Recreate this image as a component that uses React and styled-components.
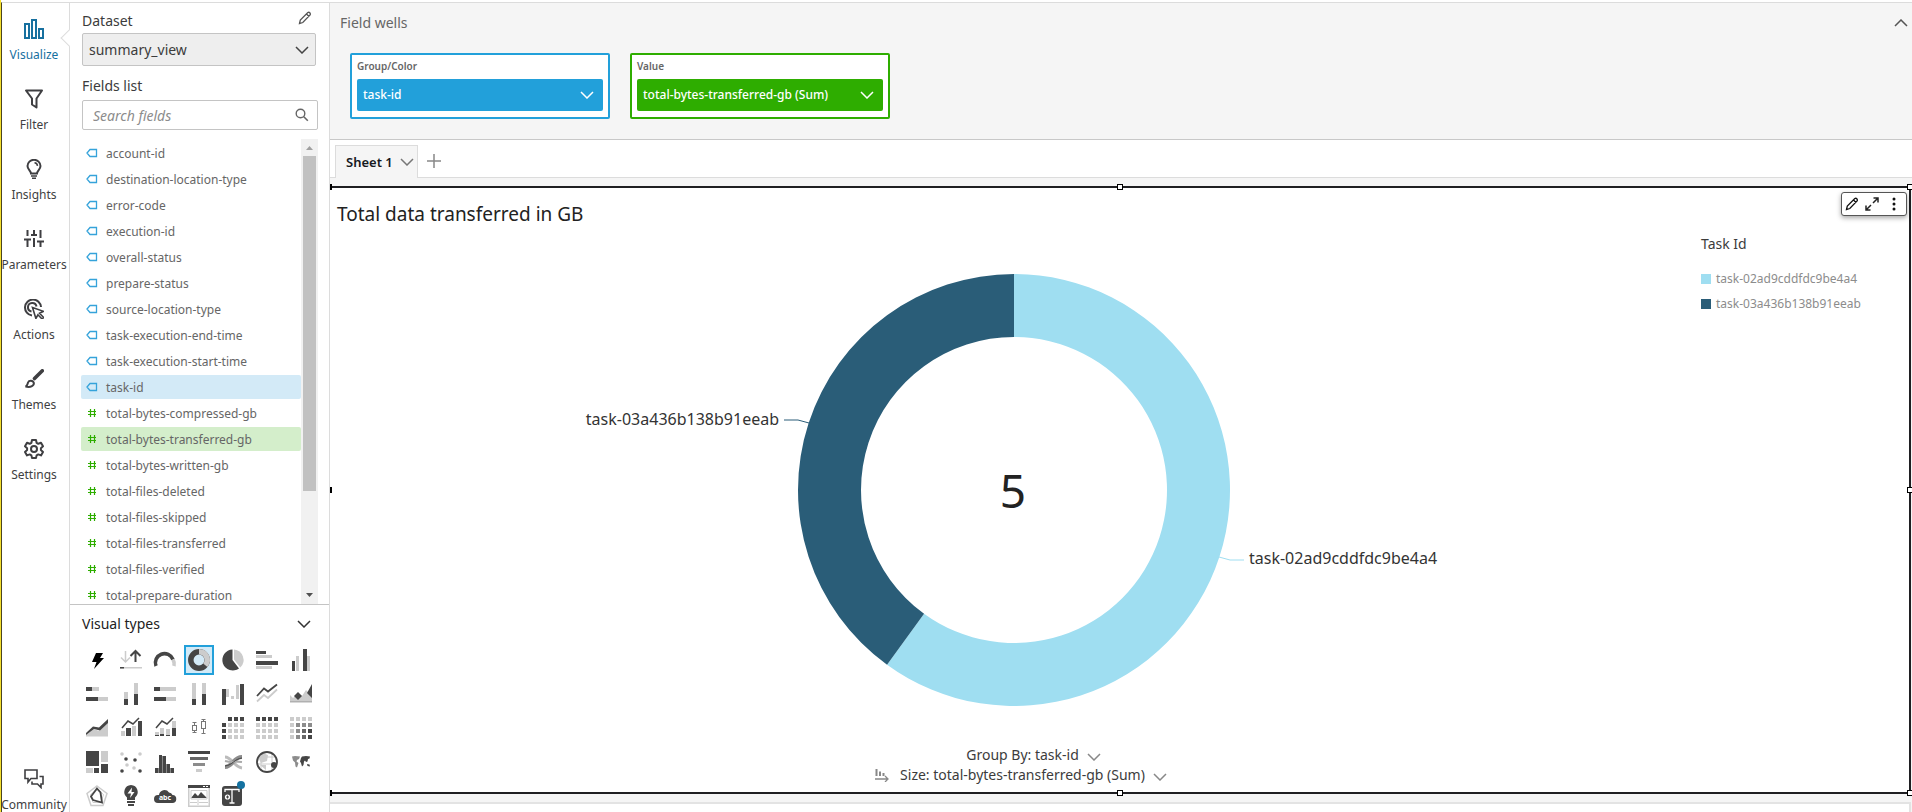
import React, { useState } from "react";
import styled, { createGlobalStyle, css } from "styled-components";

const D = "#454545";
const L = "#cccccc";

const fields = [
  { name: "account-id", type: "dimension" },
  { name: "destination-location-type", type: "dimension" },
  { name: "error-code", type: "dimension" },
  { name: "execution-id", type: "dimension" },
  { name: "overall-status", type: "dimension" },
  { name: "prepare-status", type: "dimension" },
  { name: "source-location-type", type: "dimension" },
  { name: "task-execution-end-time", type: "dimension" },
  { name: "task-execution-start-time", type: "dimension" },
  { name: "task-id", type: "dimension", used: true },
  { name: "total-bytes-compressed-gb", type: "measure" },
  { name: "total-bytes-transferred-gb", type: "measure", used: true },
  { name: "total-bytes-written-gb", type: "measure" },
  { name: "total-files-deleted", type: "measure" },
  { name: "total-files-skipped", type: "measure" },
  { name: "total-files-transferred", type: "measure" },
  { name: "total-files-verified", type: "measure" },
  { name: "total-prepare-duration", type: "measure" },
];

const slices = [
  { name: "task-02ad9cddfdc9be4a4", value: 3, color: "#9fdef1" },
  { name: "task-03a436b138b91eeab", value: 2, color: "#2a5d78" },
];

/* nav icons, 20 x 20 */
const navItems = [
  {
    label: "Visualize",
    icon: (
      <g>
        <rect x="1" y="5" width="4" height="14" />
        <rect x="8" y="1" width="4" height="18" />
        <rect x="15" y="10" width="4" height="9" />
      </g>
    ),
  },
  {
    label: "Filter",
    icon: <path d="M2 1.5h16l-5.5 8v9L8 15.5v-6z" strokeLinejoin="round" />,
  },
  {
    label: "Insights",
    icon: (
      <g>
        <path d="M7 14.5c0-2.500-3.500-4-3.500-7.500a6.500 6.200 0 0 1 13 0c0 3.500-3.500 5-3.500 7.500z" />
        <path d="M10.500 3.800c1.800.2 2.800 1.300 3 3" strokeWidth="1.500" />
        <path d="M7 17h6M8 19.200h4" strokeWidth="1.600" />
      </g>
    ),
  },
  {
    label: "Parameters",
    icon: (
      <g>
        <path d="M3.500 1v6M3.500 11v7M10 1v4M10 9v9M16.500 1v8M16.500 13v5" />
        <path d="M0 10.500h7M7 6h6M13 12.500h7" />
      </g>
    ),
  },
  {
    label: "Actions",
    icon: (
      <g>
        <path d="M8 16.500a8 8 0 1 1 9-8.500" />
        <path d="M7.500 12.500a4.300 4.300 0 1 1 5-5" />
        <path
          d="M8.500 8.500l11 3.800-4 2 4.200 4.200-1.600 1.500-4.200-4.200-2 3.700z"
          fill="#fff"
          strokeWidth="1.600"
        />
      </g>
    ),
  },
  {
    label: "Themes",
    icon: (
      <g>
        <path d="M18.300 1.800L10.500 9.500" strokeWidth="3.600" strokeLinecap="round" />
        <path d="M1.500 17.500c2-.5 2-2.500 2.500-4 1-2.500 5-2.500 5.800.3.600 2.700-2.800 5-8.300 3.700z" />
      </g>
    ),
  },
  {
    label: "Settings",
    icon: (
      <g>
        <path
          d="M8 1h4l.6 2.800 1.700 1 2.700-1 2 3.500-2.100 1.900v1.800l2.100 1.900-2 3.500-2.700-1-1.700 1L12 19H8l-.6-2.600-1.700-1-2.700 1-2-3.500L3.100 11V9.200L1 7.300l2-3.500 2.700 1 1.700-1z"
          strokeLinejoin="round"
        />
        <circle cx="10" cy="10" r="3" />
      </g>
    ),
  },
];

const communityIcon = (
  <g>
    <path d="M1 1h12v8.500H7L4 13V9.500H1z" strokeWidth="1.600" />
    <path d="M15.500 7.500H19V15h-2v3.500L13.500 15H8v-2.500" strokeWidth="1.600" />
  </g>
);

const bars = (list) =>
  list.map(([x, y, w, h, c], i) => (
    <rect key={i} x={x} y={y} width={w} height={h} fill={c} />
  ));

const cells = (colorAt) => {
  const out = [];
  for (let r = 0; r < 4; r++) {
    for (let c = 0; c < 4; c++) {
      const color = colorAt(r, c);
      if (color) out.push([c * 6, r * 6, 4, 4, color]);
    }
  }
  return bars(out);
};

const heat = [
  [L, L, L, L],
  [L, "#8c8c8c", "#8c8c8c", "#8c8c8c"],
  [L, "#8c8c8c", "#666", D],
  [L, "#8c8c8c", "#666", D],
];

/* visual type icons, 22 x 22 */
const visualTypes = [
  { label: "AutoGraph", icon: <path d="M10 4h7l-3 5h4L8 20l2.500-7H6z" fill="#000" /> },
  {
    label: "KPI",
    icon: (
      <g fill="none" strokeWidth="1.500">
        <path d="M5.500 2v11M1 8.500L5.500 13 10 8.500" stroke={L} />
        <path d="M15.500 13V2M10.500 7L15.500 2l5 5" stroke={D} strokeWidth="2" />
        {bars([[0, 18, 22, 1.5, L], [0, 18, 4, 1.5, D]])}
      </g>
    ),
  },
  {
    label: "Gauge chart",
    icon: (
      <g fill="none" strokeWidth="3.600">
        <path d="M2 17a9 9 0 0 1 17-6.500" stroke={D} />
        <path d="M19 10.500a9 9 0 0 1 1 6.500" stroke={L} />
      </g>
    ),
  },
  {
    label: "Donut chart",
    icon: (
      <g fill="none" strokeWidth="5.500">
        <circle cx="11" cy="11" r="8.200" stroke={D} />
        <path d="M11 2.800a8.200 8.200 0 0 1 6.300 13.500" stroke={L} />
      </g>
    ),
  },
  {
    label: "Pie chart",
    icon: (
      <g>
        <path d="M10.500 .5v10.500l6.500 8.500A10.500 10.500 0 1 1 10.500 .5z" fill={D} />
        <path d="M12 .5a10.500 10.500 0 0 1 6.300 18L12 10.500z" fill={L} />
      </g>
    ),
  },
  {
    label: "Horizontal bar chart",
    icon: bars([[0, 2, 10, 3, D], [0, 6, 16, 3, L], [0, 12, 22, 4, D], [0, 17, 16, 3, L]]),
  },
  {
    label: "Vertical bar chart",
    icon: bars([[2, 12, 3, 10, D], [6, 7, 3, 15, L], [13, 0, 4, 22, D], [17, 7, 3, 15, L]]),
  },
  {
    label: "Horizontal stacked bar chart",
    icon: bars([[0, 4, 6, 4, D], [6, 4, 7, 4, L], [0, 14, 12, 4, D], [12, 14, 10, 4, L]]),
  },
  {
    label: "Vertical stacked bar chart",
    icon: bars([[4, 9, 4, 7, L], [4, 16, 4, 6, D], [14, 0, 4, 11, L], [14, 11, 4, 11, D]]),
  },
  {
    label: "Horizontal stacked 100% bar chart",
    icon: bars([[0, 4, 6, 4, D], [6, 4, 16, 4, L], [0, 14, 12, 4, D], [12, 14, 10, 4, L]]),
  },
  {
    label: "Vertical stacked 100% bar chart",
    icon: bars([[4, 0, 4, 16, L], [4, 16, 4, 6, D], [14, 0, 4, 11, L], [14, 11, 4, 11, D]]),
  },
  {
    label: "Waterfall chart",
    icon: bars([
      [0, 6, 4, 16, D],
      [4, 6, 3, 8, L],
      [9, 13, 3, 3, L],
      [14, 2, 3, 14, L],
      [18, 1, 4, 21, D],
    ]),
  },
  {
    label: "Line chart",
    icon: (
      <g fill="none" strokeWidth="1.800">
        <path d="M1 18.500l7-6.500 4 3 9-8.500" stroke={L} />
        <path d="M1 13l7-7.500 4 3 9-7" stroke={D} />
      </g>
    ),
  },
  {
    label: "Area line chart",
    icon: (
      <g>
        <path d="M0 12l3 3 5-5 4 3 4-6 6 6v6H0z" fill={L} />
        <path d="M4 13l4-4 4 4-4 4zM22 1v14l-5-5z" fill={D} />
        <path d="M0 18h22v1.500H0z" fill="#b0b0b0" />
      </g>
    ),
  },
  {
    label: "Stacked area line chart",
    icon: (
      <g>
        <path d="M0 18l8-6 5 2 9-9v14.500H0z" fill={L} />
        <path d="M0 16l7-6.500 6 1L22 2v4l-8 7.500-6-1.500-8 6z" fill={D} />
      </g>
    ),
  },
  {
    label: "Clustered bar combo chart",
    icon: (
      <g>
        {bars([[1, 14, 4, 5, L], [6, 11, 5, 8, D], [12, 9, 4, 10, L], [18, 4, 4, 15, D]])}
        <path d="M2 11l6-7 5 3 6-6" fill="none" stroke={D} strokeWidth="1.500" />
      </g>
    ),
  },
  {
    label: "Stacked bar combo chart",
    icon: (
      <g>
        {bars([
          [1, 15, 4, 3, L],
          [1, 18, 4, 1, D],
          [6, 11, 4, 6, L],
          [6, 17, 4, 2, D],
          [12, 12, 4, 6, L],
          [12, 18, 4, 1, D],
          [18, 4, 4, 7, L],
          [18, 11, 4, 8, D],
        ])}
        <path d="M2 11l6-7 5 3 6-6" fill="none" stroke={D} strokeWidth="1.500" />
      </g>
    ),
  },
  {
    label: "Box plot",
    icon: (
      <g fill="none" stroke="#777">
        <path d="M6.500 5v3M6.500 13v3M4.500 5.500h4M4.500 15.500h4" />
        <rect x="4.500" y="8.500" width="4" height="5" />
        <path d="M15.500 2v3M15.500 11v5M13.500 2.500h4M13.500 16.500h4" />
        <rect x="13.500" y="4.500" width="4" height="7" />
      </g>
    ),
  },
  {
    label: "Pivot table",
    icon: cells((r, c) => (r === 0 && c === 0 ? null : r === 0 || c === 0 ? D : L)),
  },
  { label: "Table", icon: cells((r) => (r === 0 ? D : L)) },
  { label: "Heat map", icon: cells((r, c) => heat[r][c]) },
  {
    label: "Tree map",
    icon: bars([
      [0, 0, 13, 15, D],
      [15, 0, 7, 11, L],
      [0, 17, 7, 5, L],
      [8, 17, 5, 5, D],
      [15, 13, 7, 9, D],
    ]),
  },
  {
    label: "Scatter plot",
    icon: (
      <g>
        <g fill={L}>
          <circle cx="2" cy="3" r="1.800" />
          <circle cx="20" cy="3" r="1.800" />
          <circle cx="7" cy="14" r="1.800" />
          <circle cx="14" cy="17" r="1.800" />
        </g>
        <g fill={D}>
          <circle cx="6" cy="8" r="1.800" />
          <circle cx="15" cy="9" r="1.800" />
          <circle cx="2" cy="20" r="1.800" />
          <circle cx="20" cy="20" r="1.800" />
        </g>
      </g>
    ),
  },
  {
    label: "Histogram",
    icon: (
      <g>
        {bars([
          [1, 17, 3, 5, D],
          [5, 4, 3, 18, D],
          [9, 5, 3, 17, D],
          [13, 13, 3, 9, D],
          [17, 17, 3, 5, D],
        ])}
        {bars([[8, 5, 1, 17, "#888"], [4, 17, 1, 5, "#888"], [12, 13, 1, 9, "#888"], [16, 17, 1, 5, "#888"]])}
      </g>
    ),
  },
  {
    label: "Funnel chart",
    icon: bars([
      [0, 0, 22, 3, D],
      [2, 6, 18, 3, "#666"],
      [5, 12, 12, 3, "#8c8c8c"],
      [8, 18, 6, 3, L],
    ]),
  },
  {
    label: "Sankey diagram",
    icon: (
      <g fill="none">
        <path d="M3 6c7 0 9 10 17 11" stroke="#bbb" strokeWidth="3" />
        <path d="M3 16c8 0 8-10 17-10" stroke="#8c8c8c" strokeWidth="4" />
        <path d="M3 10c8 2 10 0 17 1" stroke="#aaa" strokeWidth="2" />
        <path d="M3 15c8-1 9-7 17-8" stroke={D} strokeWidth="1" />
      </g>
    ),
  },
  {
    label: "Points on map",
    icon: (
      <g>
        <path d="M2 6l5-4 5 2-1 6-6 2zM4 14h6v5z" fill={L} />
        <path d="M5 2v18M1 13h20M3 6h17M16 2v18" stroke={L} fill="none" />
        <circle cx="11" cy="11" r="10" fill="none" stroke={D} strokeWidth="1.800" />
        <circle cx="18" cy="14" r="3" fill={D} />
      </g>
    ),
  },
  {
    label: "Filled map",
    icon: (
      <g>
        <path d="M2 5.500l3-.5 5 .5-1 2.500-2 1-.5 1.500 2 1.500-1.500 4.500-1.500-1-.5-4-2-2z" fill="#8c8c8c" />
        <path d="M11 7l1-1.500L16 5l4 .5-.5 2-1.500.5-.5 2.500-1.500.500-1-1.500-1 1-.5 3.500-1.500 1.500-1-3.500-1-1.500z" fill={D} />
        <path d="M17 13l2.500.5.5 2-2.500-.5z" fill={D} />
      </g>
    ),
  },
  {
    label: "Radar chart",
    icon: (
      <g fill="none">
        <path d="M11 1l10 7.500-4 12H5L1 8.500z" stroke={L} strokeWidth="1.500" />
        <path d="M11 4.500l6.500 5-2.500 8H7L4.500 9.500z" stroke={L} />
        <path d="M11 3.500l3.500 4L16 17.500 7 15l-2-3.500z" stroke={D} strokeWidth="1.800" />
      </g>
    ),
  },
  {
    label: "Insight",
    icon: (
      <g>
        <path d="M11 0a7 7 0 0 0-4 12.500V15h8v-2.500A7 7 0 0 0 11 0z" fill={D} />
        <path d="M12 2.500L7.500 8.500H11L10 13l4.500-6H11.500z" fill="#fff" />
        {bars([[7, 16, 8, 2, D], [8, 19, 6, 2, D]])}
      </g>
    ),
  },
  {
    label: "Word cloud",
    icon: (
      <g>
        <path
          d="M4 18a4 4 0 0 1 0-8h1a5.500 5.500 0 0 1 10-2.500 4 4 0 0 1 3.500 2.500 4 4 0 0 1-.5 8z"
          fill={D}
        />
        <text x="11" y="15" fill="#fff" fontSize="7" fontWeight="700" textAnchor="middle">
          abc
        </text>
      </g>
    ),
  },
  {
    label: "Custom visual content",
    icon: (
      <g>
        <rect x=".75" y=".75" width="20.500" height="20.500" fill="#fff" stroke={L} strokeWidth="1.500" />
        {bars([[0, 0, 22, 3, D], [15, 1, 2, 1, "#fff"], [18, 1, 2, 1, "#fff"]])}
        <path d="M3 13l4-5 3 3 3-4 6 6z" fill={D} />
        <path d="M3 5.500h16v8.500H3zM2 17.500h7M11 17.500h9M10 15v5" fill="none" stroke={L} />
      </g>
    ),
  },
  {
    label: "Text box",
    icon: (
      <g>
        <rect x="0" y="1" width="20" height="20" rx="3" fill={D} />
        <path d="M3 7V4.500h14V7M10 4.500V18M7.500 18h5" fill="none" stroke="#fff" strokeWidth="1.300" />
        <circle cx="5.500" cy="12" r="2.600" fill="#fff" />
        <path d="M5.500 10.500v3M4 12h3" stroke={D} />
        <circle cx="19" cy="0" r="4" fill="#1572a1" />
      </g>
    ),
  },
];

const Chevron = ({ up, color = "#555" }) => (
  <ChevronSvg viewBox="0 0 14 8" aria-hidden="true">
    <path
      d={up ? "M1 7l6-6 6 6" : "M1 1l6 6 6-6"}
      fill="none"
      stroke={color}
      strokeWidth="1.500"
    />
  </ChevronSvg>
);

const Pencil = ({ color = "#555" }) => (
  <SmallSvg viewBox="0 0 14 14" aria-hidden="true">
    <path
      d="M1.500 12.500l.8-3.500 7.500-7.500q1.200-.6 2 .3t.5 1.900L4.800 11.500zM8.500 3l2.500 2.500"
      fill="none"
      stroke={color}
      strokeWidth="1.300"
    />
  </SmallSvg>
);

const FieldIcon = ({ type }) =>
  type === "dimension" ? (
    <FieldSvg viewBox="0 0 12 10" aria-hidden="true">
      <path d="M4 1.500h6.500v7H4L1 5z" fill="none" stroke="#35a3da" strokeWidth="1.300" />
    </FieldSvg>
  ) : (
    <FieldSvg viewBox="0 0 12 10" aria-hidden="true">
      <path d="M4.500 1v8M8.500 1v8M2 3.500h8M2 6.500h8" stroke="#2ead00" strokeWidth="1.200" />
    </FieldSvg>
  );

const DonutChart = () => {
  const cx = 684;
  const cy = 264;
  const outer = 216;
  const inner = 153;
  const total = slices.reduce((sum, s) => sum + s.value, 0);
  const point = (r, turn) => {
    const a = turn * 2 * Math.PI;
    return `${cx + r * Math.sin(a)} ${cy - r * Math.cos(a)}`;
  };
  let start = 0;

  return (
    <ChartSvg viewBox="0 0 1368 519" role="img" aria-label="Total data transferred in GB">
      {slices.map((s) => {
        const end = start + s.value / total;
        const big = end - start > 0.5 ? 1 : 0;
        const d = `M${point(outer, start)}A${outer} ${outer} 0 ${big} 1 ${point(outer, end)}L${point(
          inner,
          end
        )}A${inner} ${inner} 0 ${big} 0 ${point(inner, start)}z`;
        start = end;
        return <path key={s.name} d={d} fill={s.color} />;
      })}
      <path d="M454 194h14l11 3" fill="none" stroke={slices[1].color} />
      <path d="M889 331l11 3h14" fill="none" stroke={slices[0].color} />
      <SliceLabel x="449" y="199" textAnchor="end">
        {slices[1].name}
      </SliceLabel>
      <SliceLabel x="919" y="338">
        {slices[0].name}
      </SliceLabel>
      <TotalLabel x={cx - 1} y="282" textAnchor="middle">
        {total}
      </TotalLabel>
    </ChartSvg>
  );
};

const App = () => {
  const [search, setSearch] = useState("");
  const [visual, setVisual] = useState("Donut chart");
  const shown = fields.filter((f) => f.name.includes(search));

  return (
    <Shell>
      <GlobalStyle />
      <Page>
        <SideNav>
          {navItems.map((item, i) => (
            <NavButton key={item.label} $active={i === 0}>
              <NavSvg viewBox="0 0 20 20">{item.icon}</NavSvg>
              {item.label}
            </NavButton>
          ))}
          <NavButton $last>
            <NavSvg viewBox="0 0 20 20">{communityIcon}</NavSvg>
            Community
          </NavButton>
        </SideNav>

        <Panel>
          <PanelTop>
            <LabelRow>
              <label htmlFor="dataset">Dataset</label>
              <IconButton aria-label="Edit dataset">
                <Pencil />
              </IconButton>
            </LabelRow>
            <SelectWrap>
              <select id="dataset" defaultValue="summary_view">
                <option>summary_view</option>
              </select>
              <Chevron color="#444" />
            </SelectWrap>
            <FieldsLabel htmlFor="search">Fields list</FieldsLabel>
            <SearchBox>
              <input
                id="search"
                placeholder="Search fields"
                value={search}
                onChange={(e) => setSearch(e.target.value)}
              />
              <SmallSvg viewBox="0 0 14 14">
                <circle cx="5.500" cy="5.500" r="4.300" fill="none" stroke="#666" strokeWidth="1.400" />
                <path d="M8.800 8.800l4 4" stroke="#666" strokeWidth="1.600" />
              </SmallSvg>
            </SearchBox>
          </PanelTop>

          <FieldsArea>
            <FieldsList>
              {shown.map((f) => (
                <FieldRow key={f.name} $type={f.type} $used={f.used}>
                  <FieldIcon type={f.type} />
                  {f.name}
                </FieldRow>
              ))}
            </FieldsList>
            <Scrollbar>
              <Arrow viewBox="0 0 17 17">
                <path d="M5 11h7L8.500 7z" fill="#a0a0a0" />
              </Arrow>
              <Thumb />
              <Arrow viewBox="0 0 17 17">
                <path d="M5 6h7l-3.500 4z" fill="#505050" />
              </Arrow>
            </Scrollbar>
          </FieldsArea>

          <VisualTypes>
            <TypesHeader>
              Visual types
              <Chevron color="#333" />
            </TypesHeader>
            <TypeGrid>
              {visualTypes.map((t) => (
                <TypeButton
                  key={t.label}
                  aria-label={t.label}
                  $selected={t.label === visual}
                  onClick={() => setVisual(t.label)}
                >
                  <TypeSvg viewBox="0 0 22 22">{t.icon}</TypeSvg>
                </TypeButton>
              ))}
            </TypeGrid>
          </VisualTypes>
        </Panel>

        <Main>
          <FieldWells>
            <WellsHeader>
              Field wells
              <IconButton aria-label="Collapse field wells">
                <Chevron up />
              </IconButton>
            </WellsHeader>
            <Wells>
              <Well $color="#22a0da">
                <WellLabel>Group/Color</WellLabel>
                <Pill $color="#22a0da">
                  task-id
                  <Chevron color="#fff" />
                </Pill>
              </Well>
              <Well $color="#2ead00">
                <WellLabel>Value</WellLabel>
                <Pill $color="#2ead00">
                  total-bytes-transferred-gb (Sum)
                  <Chevron color="#fff" />
                </Pill>
              </Well>
            </Wells>
          </FieldWells>

          <Tabs>
            <Tab>
              Sheet 1
              <Chevron color="#777" />
            </Tab>
            <AddTab aria-label="Add sheet">
              <SmallSvg viewBox="0 0 14 14">
                <path d="M7 0v14M0 7h14" stroke="#888" strokeWidth="1.500" />
              </SmallSvg>
            </AddTab>
          </Tabs>

          <Sheet>
            <Visual>
              <VisualTitle>Total data transferred in GB</VisualTitle>
              <VisualBody>
                <ChartColumn>
                  <DonutChart />
                  <Captions>
                    <Caption>
                      <CaptionSlot />
                      Group By: task-id
                      <Chevron color="#888" />
                    </Caption>
                    <Caption>
                      <CaptionSlot>
                        <SmallSvg viewBox="0 0 14 14">
                          <path
                            d="M1.500 1v7M5 3.500V8M8.500 5v3"
                            stroke="#888"
                            strokeWidth="2"
                          />
                          <path d="M0 11h12M10 8l3 3-3 3" fill="none" stroke="#888" strokeWidth="1.300" />
                        </SmallSvg>
                      </CaptionSlot>
                      Size: total-bytes-transferred-gb (Sum)
                      <Chevron color="#888" />
                    </Caption>
                  </Captions>
                </ChartColumn>
                <Legend>
                  <LegendTitle>Task Id</LegendTitle>
                  {slices.map((s) => (
                    <LegendItem key={s.name} $color={s.color}>
                      {s.name}
                    </LegendItem>
                  ))}
                </Legend>
              </VisualBody>

              <Toolbar>
                <IconButton aria-label="Edit">
                  <Pencil color="#111" />
                </IconButton>
                <IconButton aria-label="Maximize">
                  <SmallSvg viewBox="0 0 14 14">
                    <path
                      d="M8 6l5-5M8.500 1H13v4.500M6 8l-5 5M1 8.500V13h4.500"
                      fill="none"
                      stroke="#222"
                      strokeWidth="1.500"
                    />
                  </SmallSvg>
                </IconButton>
                <IconButton aria-label="Menu options">
                  <SmallSvg viewBox="0 0 14 14">
                    <circle cx="9" cy="2" r="1.500" fill="#111" />
                    <circle cx="9" cy="7" r="1.500" fill="#111" />
                    <circle cx="9" cy="12" r="1.500" fill="#111" />
                  </SmallSvg>
                </IconButton>
              </Toolbar>

              <Handles>
                <Handle $x="0%" $y="0%" $cut />
                <Handle $x="50%" $y="0%" />
                <Handle $x="100%" $y="0%" />
                <Handle $x="0%" $y="50%" $cut />
                <Handle $x="100%" $y="50%" />
                <Handle $x="0%" $y="100%" $cut />
                <Handle $x="50%" $y="100%" />
                <Handle $x="100%" $y="100%" />
              </Handles>
            </Visual>
            <NextVisual />
          </Sheet>
        </Main>
      </Page>
    </Shell>
  );
};

export default App;

const GlobalStyle = createGlobalStyle`
  * {
    box-sizing: border-box;
  }
  body {
    margin: 0;
    background: #fff;
    color: #3c3c3c;
    font-family: "Noto Sans", "Open Sans", sans-serif;
    font-size: 14px;
    line-height: 20px;
  }
  button, input, select {
    font: inherit;
    color: inherit;
    margin: 0;
  }
  button {
    border: 0;
    padding: 0;
    background: none;
    cursor: pointer;
  }
`;

const Shell = styled.div`
  height: 100vh;
  min-height: 640px;
  padding-top: 2px;
  border-left: 1px solid #f5df2e;
  overflow: hidden;
`;

const Page = styled.div`
  display: flex;
  height: 100%;
  border-top: 1px solid #dcdcdc;
  border-left: 1px solid #4a4520;
`;

const ChevronSvg = styled.svg`
  width: 14px;
  height: 8px;
  flex: none;
`;

const SmallSvg = styled.svg`
  width: 14px;
  height: 14px;
  flex: none;
  display: block;
`;

const FieldSvg = styled.svg`
  width: 12px;
  height: 10px;
  margin-bottom: 2px;
  flex: none;
`;

const IconButton = styled.button`
  display: flex;
  align-items: center;
`;

const SideNav = styled.nav`
  display: flex;
  flex-direction: column;
  width: 68px;
  flex: none;
  padding: 1px 3px 0 0;
  border-right: 1px solid #dcdcdc;
  position: relative;

  &::after {
    content: "";
    position: absolute;
    top: 29px;
    right: -6px;
    width: 11px;
    height: 11px;
    background: #fff;
    border-left: 1px solid #dcdcdc;
    border-bottom: 1px solid #dcdcdc;
    transform: rotate(45deg);
  }
`;

const NavButton = styled.button`
  display: flex;
  flex-direction: column;
  align-items: center;
  gap: 8px;
  height: 70px;
  padding-top: 15px;
  font-size: 12px;
  line-height: 16px;
  color: ${({ $active }) => ($active ? "#17709f" : "#3f3f42")};
  ${({ $last }) =>
    $last &&
    css`
      height: 43px;
      padding-top: 0;
      margin-top: auto;
    `}
`;

const NavSvg = styled.svg`
  width: 20px;
  height: 20px;
  flex: none;
  fill: none;
  stroke: currentColor;
  stroke-width: 2;
`;

const Panel = styled.aside`
  display: flex;
  flex-direction: column;
  width: 260px;
  flex: none;
  border-right: 1px solid #dcdcdc;
`;

const PanelTop = styled.div`
  padding: 8px 11px 9px 12px;
`;

const LabelRow = styled.div`
  display: flex;
  justify-content: space-between;
  padding-right: 6px;
  margin-bottom: 2px;
  ${IconButton} {
    height: 14px;
  }
`;

const SelectWrap = styled.div`
  display: flex;
  align-items: center;
  margin: 0 2px 10px 0;
  position: relative;

  select {
    appearance: none;
    width: 100%;
    height: 33px;
    padding: 0 6px;
    border: 1px solid #c4c4c4;
    border-radius: 2px;
    background: #eee;
  }
  svg {
    position: absolute;
    right: 7px;
    pointer-events: none;
  }
`;

const FieldsLabel = styled.label`
  display: block;
  margin-bottom: 4px;
`;

const SearchBox = styled.div`
  display: flex;
  align-items: center;
  height: 30px;
  padding: 0 8px 0 10px;
  border: 1px solid #c4c4c4;
  border-radius: 2px;

  input {
    flex: 1;
    min-width: 0;
    border: 0;
    padding: 2px 0 0;
    outline: none;
    background: none;
  }
  input::placeholder {
    color: #8c8c8c;
    font-style: italic;
  }
`;

const FieldsArea = styled.div`
  display: flex;
  flex: 1;
  min-height: 0;
  padding: 0 11px;
`;

const FieldsList = styled.ul`
  flex: 1;
  display: flex;
  flex-direction: column;
  gap: 2px;
  margin: 0;
  padding: 2px 0 0;
  list-style: none;
  overflow: hidden;
`;

const FieldRow = styled.li`
  display: flex;
  align-items: center;
  gap: 8px;
  flex: none;
  height: 24px;
  padding: 2px 5px 0;
  border-radius: 2px;
  font-size: 12px;
  color: #666;
  background: ${({ $used, $type }) =>
    !$used ? "none" : $type === "dimension" ? "#d3eaf7" : "#d4eecb"};
`;

const Scrollbar = styled.div`
  display: flex;
  flex-direction: column;
  justify-content: space-between;
  width: 17px;
  background: #f1f1f1;
`;

const Arrow = styled.svg`
  width: 17px;
  height: 17px;
  flex: none;
`;

const Thumb = styled.div`
  width: 13px;
  height: 72%;
  margin: 0 auto auto;
  background: #c1c1c1;
`;

const VisualTypes = styled.section`
  flex: none;
  border-top: 1px solid #c4c4c4;
  padding: 9px 12px 1px;
`;

const TypesHeader = styled.div`
  display: flex;
  justify-content: space-between;
  align-items: center;
  padding-right: 6px;
  margin-bottom: 11px;
  color: #222;
`;

const TypeGrid = styled.div`
  display: grid;
  grid-template-columns: repeat(7, 30px);
  gap: 4px;
`;

const TypeButton = styled.button`
  display: flex;
  align-items: center;
  justify-content: center;
  width: 30px;
  height: 30px;
  border: 2px solid ${({ $selected }) => ($selected ? "#22a0da" : "transparent")};
  background: ${({ $selected }) => ($selected ? "#d3eaf7" : "none")};
`;

const TypeSvg = styled.svg`
  width: 22px;
  height: 22px;
  flex: none;
  overflow: visible;
`;

const Main = styled.main`
  display: flex;
  flex-direction: column;
  flex: 1;
  min-width: 0;
`;

const FieldWells = styled.section`
  padding: 10px 4px 20px 10px;
  background: #f5f5f5;
  border-bottom: 1px solid #c8c8c8;
`;

const WellsHeader = styled.div`
  display: flex;
  justify-content: space-between;
  color: #666;
`;

const Wells = styled.div`
  display: flex;
  gap: 20px;
  padding: 20px 10px 0;
`;

const Well = styled.div`
  width: 260px;
  padding: 0 5px 6px;
  background: #fff;
  border: 2px solid ${({ $color }) => $color};
  border-radius: 2px;
`;

const WellLabel = styled.div`
  margin-bottom: 2px;
  font-size: 10px;
  font-weight: 600;
  line-height: 22px;
  color: #666;
`;

const Pill = styled.button`
  display: flex;
  align-items: center;
  justify-content: space-between;
  width: 100%;
  height: 32px;
  padding: 0 9px 0 6px;
  border-radius: 2px;
  background: ${({ $color }) => $color};
  color: #fff;
  font-size: 12px;
  font-weight: 500;
`;

const Tabs = styled.div`
  display: flex;
  align-items: stretch;
  padding: 5px 5px 0;
  height: 38px;
  border-bottom: 1px solid #dcdcdc;
`;

const Tab = styled.button`
  display: flex;
  align-items: center;
  gap: 7px;
  height: 33px;
  padding: 0 3px 0 10px;
  border: 1px solid #dcdcdc;
  border-bottom: 0;
  background: #f5f5f5;
  color: #16191f;
  font-size: 13px;
  font-weight: 600;
`;

const AddTab = styled.button`
  display: flex;
  align-items: center;
  padding: 0 9px;
`;

const Sheet = styled.div`
  display: flex;
  flex-direction: column;
  flex: 1;
  min-height: 0;
  padding: 8px 1px 0 0;
  background: #f5f5f5;
`;

const Visual = styled.section`
  position: relative;
  display: flex;
  flex-direction: column;
  flex: 1;
  min-height: 0;
  background: #fff;
  border: 2px solid #1f1f22;
  border-left: 0;
`;

const VisualTitle = styled.h2`
  margin: 0;
  padding: 14px 7px 0;
  font-size: 19px;
  font-weight: 400;
  line-height: 24px;
  color: #222;
`;

const VisualBody = styled.div`
  display: flex;
  flex: 1;
  min-height: 0;
`;

const ChartColumn = styled.div`
  display: flex;
  flex-direction: column;
  flex: 1;
  min-width: 0;
`;

const ChartSvg = styled.svg`
  flex: 1;
  width: 100%;
  min-height: 0;
`;

const SliceLabel = styled.text`
  font-size: 16px;
  fill: #333;
`;

const TotalLabel = styled.text`
  font-size: 46px;
  fill: #222;
`;

const Captions = styled.div`
  display: flex;
  flex-direction: column;
  align-items: center;
  padding: 0 0 7px 14px;
`;

const Caption = styled.div`
  display: flex;
  align-items: center;
  gap: 8px;
  height: 20px;

  ${ChevronSvg} {
    margin-top: 4px;
  }
`;

const CaptionSlot = styled.span`
  width: 17px;
`;

const Legend = styled.div`
  width: 211px;
  flex: none;
  padding: 8px 3px;
`;

const LegendTitle = styled.div`
  margin-bottom: 12px;
`;

const LegendItem = styled.div`
  display: flex;
  align-items: center;
  gap: 5px;
  height: 25px;
  font-size: 12px;
  color: #8c8c8c;

  &::before {
    content: "";
    width: 10px;
    height: 10px;
    background: ${({ $color }) => $color};
  }
`;

const Toolbar = styled.div`
  position: absolute;
  top: 4px;
  right: 2px;
  display: flex;
  align-items: center;
  gap: 6px;
  height: 24px;
  padding: 0 7px 0 3px;
  background: #fff;
  border: 1px solid #555;
  border-radius: 3px;
  box-shadow: 0 2px 5px rgba(0, 0, 0, 0.35);
`;

/* runs along the middle of the selection border */
const Handles = styled.div`
  position: absolute;
  inset: -1px -1px -1px 0;
  pointer-events: none;
`;

const Handle = styled.span`
  position: absolute;
  left: ${({ $x }) => $x};
  top: ${({ $y }) => $y};
  width: ${({ $cut }) => ($cut ? "2px" : "6px")};
  height: 6px;
  margin: -3px 0 0 ${({ $cut }) => ($cut ? "0" : "-3px")};
  background: #fff;
  border: 1px solid #000;
`;

const NextVisual = styled.div`
  flex: none;
  height: 10px;
  margin-top: 8px;
  background: #fff;
  border: 2px solid #e3e3e3;
  border-width: 2px 2px 0 0;
`;
